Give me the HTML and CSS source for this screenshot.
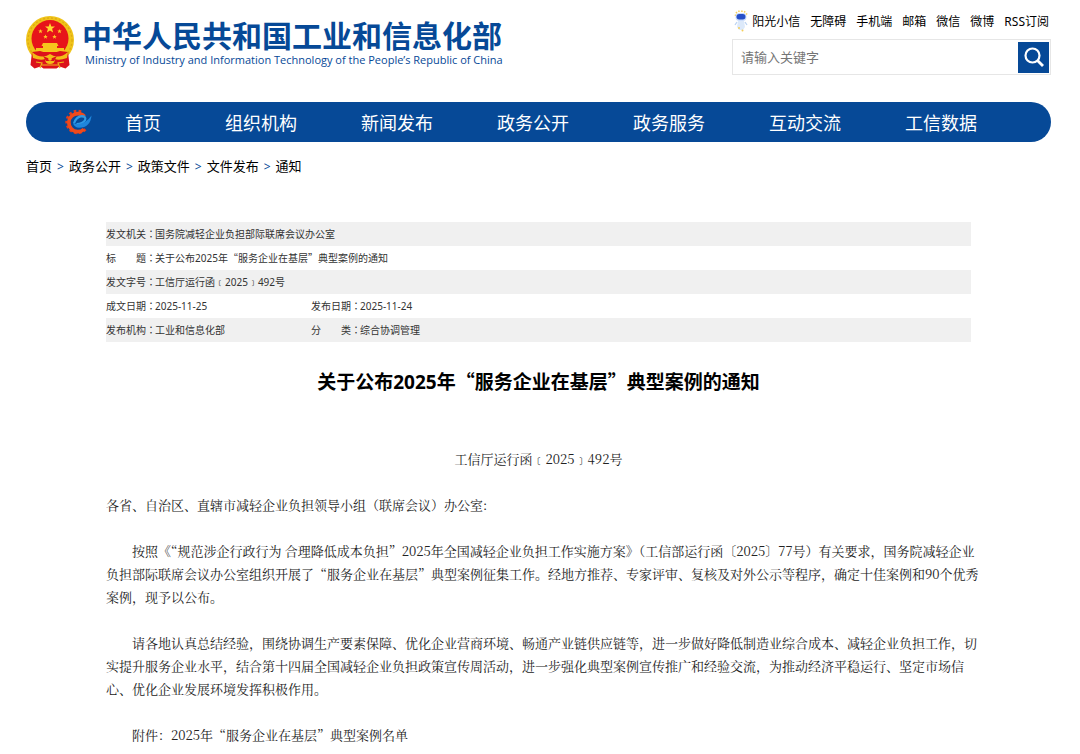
FILE: index.html
```html
<!DOCTYPE html>
<html lang="zh-CN">
<head>
<meta charset="utf-8">
<meta name="viewport" content="width=device-width, initial-scale=1">
<title>关于公布2025年“服务企业在基层”典型案例的通知</title>
<link rel="stylesheet" href="styles.css">
</head>
<body>
<header class="header">
  <a class="brand" href="#">
    <svg class="emblem" viewBox="0 0 48 53" aria-hidden="true">
      <circle cx="24" cy="24" r="24" fill="#f0c419"/>
      <circle cx="24" cy="24" r="22" fill="none" stroke="#dfab14" stroke-width="1.400" stroke-dasharray="2 2"/>
      <circle cx="24" cy="22.500" r="18.500" fill="#e7141a"/>
      <path d="M24 7l1.300 3.400 3.700.1-2.900 2.300 1 3.600-3.100-2-3.100 2 1-3.600-2.900-2.300 3.700-.1z" fill="#ffd92e"/>
      <path d="M14.500 13l.6 1.500 1.600.1-1.200 1 .4 1.600-1.400-.9-1.400.9.4-1.600-1.200-1 1.600-.1zM33.500 13l.6 1.500 1.600.1-1.200 1 .4 1.600-1.400-.9-1.400.9.4-1.600-1.200-1 1.600-.1zM19.500 18.500l.6 1.500 1.600.1-1.200 1 .4 1.600-1.400-.9-1.400.9.4-1.600-1.200-1 1.600-.1zM28.500 18.500l.6 1.500 1.600.1-1.200 1 .4 1.600-1.400-.9-1.400.9.4-1.600-1.200-1 1.600-.1z" fill="#ffc928"/>
      <path d="M17 27h14l1.500 3H31v2h7v4H10v-4h7v-2h-1.500z" fill="#f6c51d"/>
      <path d="M6 36l8-1 10 3 10-3 8 1 1.500 13-4 3.500-6-2-3 2H17.500l-3-2-6 2-4-3.500z" fill="#dc121b"/>
      <path d="M6 36q9 8 18 2 9 6 18-2l-1 6q-8 3-12 1 0 5-5 5t-5-5q-4 2-12-1z" fill="#f3bd18"/>
      <path d="M17 40l7 3 7-3-3 5h-8z" fill="#dc121b"/>
      <circle cx="24" cy="43" r="1.800" fill="#f3bd18"/>
      <path d="M10 46l6 1-2 5M38 46l-6 1 2 5M16 49h16" fill="none" stroke="#f0b51a" stroke-width="1.200"/>
    </svg>
    <span class="brand-text">
      <span class="brand-zh">中华人民共和国工业和信息化部</span>
      <span class="brand-en">Ministry of Industry and Information Technology of the People’s Republic of China</span>
    </span>
  </a>
  <div class="tools">
    <nav class="links" aria-label="快捷链接">
      <a class="robot-link" href="#"><svg class="robot" viewBox="0 0 14 22" aria-hidden="true">
        <path d="M1.500 6V3.500L4 1.300h6l2.500 2.200V6" fill="none" stroke="#f4ce58" stroke-width="1.500" stroke-dasharray="1.500 1.500"/>
        <rect x="1.500" y="3" width="11" height="8" rx="4" fill="#cbdcfa"/>
        <rect x="2.500" y="4" width="9" height="5.500" rx="2.700" fill="#2850c8"/>
        <path d="M4 11h6l1 6-2 3H5l-2-3z" fill="#dce9fa"/>
        <path d="M3 12l-2 3M11 12l2 3" stroke="#bcd3f2" stroke-width="1.300"/>
        <circle cx="5" cy="18" r="1" fill="#f4ce58"/><circle cx="8.500" cy="20.500" r="1" fill="#f4ce58"/>
      </svg>阳光小信</a>
      <a href="#">无障碍</a>
      <a href="#">手机端</a>
      <a href="#">邮箱</a>
      <a href="#">微信</a>
      <a href="#">微博</a>
      <a href="#">RSS订阅</a>
    </nav>
    <form class="search">
      <input class="search-input" type="text" placeholder="请输入关键字" aria-label="请输入关键字">
      <button class="search-button" type="button" aria-label="搜索"><svg class="search-icon" viewBox="0 0 20 20" aria-hidden="true"><circle cx="8.500" cy="8.500" r="7" fill="none" stroke="#fff" stroke-width="2.200"/><path d="M13.500 13.500l5.500 5.500" stroke="#fff" stroke-width="2.800"/></svg></button>
    </form>
  </div>
</header>
<nav class="main-nav" aria-label="主导航">
  <svg class="nav-logo" viewBox="0 0 27 26" aria-hidden="true">
    <circle cx="12.500" cy="13" r="10.800" fill="none" stroke="#e23c1c" stroke-width="2.800" stroke-dasharray="2.600 2.252 2.600 2.252 2.600 2.252 2.600 2.252 2.600 2.252 2.600 2.252 2.600 2.252 2.600 2.252 2.600 2.252 2.600 24" stroke-dashoffset="-8"/>
    <path d="M19.500 7.500A9 9 0 1 0 19 20.200" fill="none" stroke="#f04a1a" stroke-width="3.600"/>
    <path d="M9 14.500Q11 8 16.500 7.200 21.500 7.200 20 11.200 18 14.500 11.500 15" fill="none" stroke="#2f9be6" stroke-width="2.200"/>
    <path d="M8 14.500Q19.500 17 26.500 6.500 25.500 18.500 14 18.800 9.500 18.500 8 14.500z" fill="#1f86dc"/>
  </svg>
  <a href="#">首页</a>
  <a href="#">组织机构</a>
  <a href="#">新闻发布</a>
  <a href="#">政务公开</a>
  <a href="#">政务服务</a>
  <a href="#">互动交流</a>
  <a href="#">工信数据</a>
</nav>
<nav class="crumbs" aria-label="当前位置">
  <a href="#">首页</a><span class="sep">&gt;</span><a href="#">政务公开</a><span class="sep">&gt;</span><a href="#">政策文件</a><span class="sep">&gt;</span><a href="#">文件发布</a><span class="sep">&gt;</span><a href="#">通知</a>
</nav>
<main class="article">
  <table class="meta">
    <colgroup><col class="col-label"><col class="col-first"><col class="col-label"><col></colgroup>
    <tr><th scope="row">发文机关<span class="colon">：</span></th><td colspan="3">国务院减轻企业负担部际联席会议办公室</td></tr>
    <tr><th scope="row">标　　题<span class="colon">：</span></th><td colspan="3">关于公布2025年<span class="quote">“</span>服务企业在基层<span class="quote">”</span>典型案例的通知</td></tr>
    <tr><th scope="row">发文字号<span class="colon">：</span></th><td colspan="3">工信厅运行函﹝2025﹞492号</td></tr>
    <tr><th scope="row">成文日期<span class="colon">：</span></th><td>2025-11-25</td><th scope="row">发布日期<span class="colon">：</span></th><td>2025-11-24</td></tr>
    <tr><th scope="row">发布机构<span class="colon">：</span></th><td>工业和信息化部</td><th scope="row">分　　类<span class="colon">：</span></th><td>综合协调管理</td></tr>
  </table>
  <h1 class="title">关于公布2025年<span class="quote">“</span>服务企业在基层<span class="quote">”</span>典型案例的通知</h1>
  <div class="content">
    <p class="doc-number">工信厅运行函﹝2025﹞492号</p>
    <p>各省、自治区、直辖市减轻企业负担领导小组（联席会议）办公室:</p>
    <p class="indent">按照《“规范涉企行政行为 合理降低成本负担”2025年全国减轻企业负担工作实施方案》（工信部运行函〔2025〕77号）有关要求，国务院减轻企业负担部际联席会议办公室组织开展了“服务企业在基层”典型案例征集工作。经地方推荐、专家评审、复核及对外公示等程序，确定十佳案例和90个优秀案例，现予以公布。</p>
    <p class="indent">请各地认真总结经验，围绕协调生产要素保障、优化企业营商环境、畅通产业链供应链等，进一步做好降低制造业综合成本、减轻企业负担工作，切实提升服务企业水平，结合第十四届全国减轻企业负担政策宣传周活动，进一步强化典型案例宣传推广和经验交流，为推动经济平稳运行、坚定市场信心、优化企业发展环境发挥积极作用。</p>
    <p class="indent">附件：2025年“服务企业在基层”典型案例名单</p>
  </div>
</main>
</body>
</html>
```
FILE: styles.css
```css
* { box-sizing: border-box; }

body {
  margin: 0;
  padding: 0 29px 0 26px;
  background: #fff;
  color: #000;
  font-family: "Noto Sans", "Noto Sans CJK SC", sans-serif;
  font-size: 13px;
}

a { color: inherit; text-decoration: none; }

.header {
  display: flex;
  justify-content: space-between;
  align-items: flex-start;
  padding-top: 8px;
  height: 102px;
}

.brand {
  display: flex;
  align-items: flex-start;
  gap: 8px;
  padding-top: 8px;
  color: #064997;
  white-space: nowrap;
}
.emblem { width: 48px; height: 53px; }
.brand-text { display: flex; flex-direction: column; }
.brand-zh { font: bold 30px/36px "Noto Sans CJK SC", sans-serif; }
.brand-en { padding: 1px 0 0 3px; font: 500 11px/14px "Open Sans", "Noto Sans", sans-serif; }

.tools { width: 319px; padding-top: 2px; }
.links {
  display: flex;
  justify-content: flex-end;
  gap: 10px;
  padding-right: 2px;
  font-size: 12px;
  line-height: 24px;
  height: 29px;
  white-space: nowrap;
}
.robot-link { display: flex; gap: 4px; }
.robot { width: 14px; height: 22px; }

.search {
  display: flex;
  align-items: center;
  height: 36px;
  padding-right: 1px;
  border: 1px solid #e6e6e6;
}
.search-input {
  flex: 1;
  min-width: 0;
  padding: 0 8px;
  border: 0;
  outline: 0;
  background: transparent;
  font: 13px/32px "Noto Sans", "Noto Sans CJK SC", sans-serif;
}
.search-input::placeholder { color: #757575; }
.search-button {
  display: grid;
  place-items: center;
  width: 31px;
  height: 31px;
  padding: 0;
  border: 0;
  background: #064997;
}
.search-icon { width: 20px; height: 20px; }

.main-nav {
  display: flex;
  align-items: center;
  gap: 64px;
  height: 40px;
  padding: 0 0 1px 39px;
  border-radius: 20px;
  background: #064997;
  color: #fff;
  font-size: 18px;
  white-space: nowrap;
}
.nav-logo { width: 27px; height: 26px; margin-right: -31px; }

.crumbs { padding-top: 12px; line-height: 24px; }
.sep { margin: 0 5px; color: #064997; font-size: 12px; }

.article { margin: 43px 80px 0; }

.meta {
  width: 100%;
  border-collapse: collapse;
  table-layout: fixed;
  color: #333;
  font-size: 10px;
  line-height: 24px;
}
.meta tr:nth-child(odd) { background: #f0f0f0; }
.meta th, .meta td { padding: 0; font-weight: normal; text-align: left; white-space: nowrap; }
.col-label { width: 49px; }
.col-first { width: 156px; }
.colon { font-family: "Noto Sans CJK TC", sans-serif; -webkit-locale: "zh-TW"; }
.quote { font-family: "Noto Sans CJK SC", sans-serif; }

.title {
  margin: 23px 0 0;
  font-size: 19px;
  line-height: 32px;
  text-align: center;
}

.content {
  margin-right: -15px;
  padding-top: 49px;
  color: #222;
  font: 13px/23px "Noto Serif CJK SC", "Noto Serif SC", "Noto Sans CJK SC", serif;
}
.content p { margin: 0 0 23px; }
.content .doc-number { padding-right: 15px; text-align: center; }
.content .indent { text-indent: 2em; }
```
